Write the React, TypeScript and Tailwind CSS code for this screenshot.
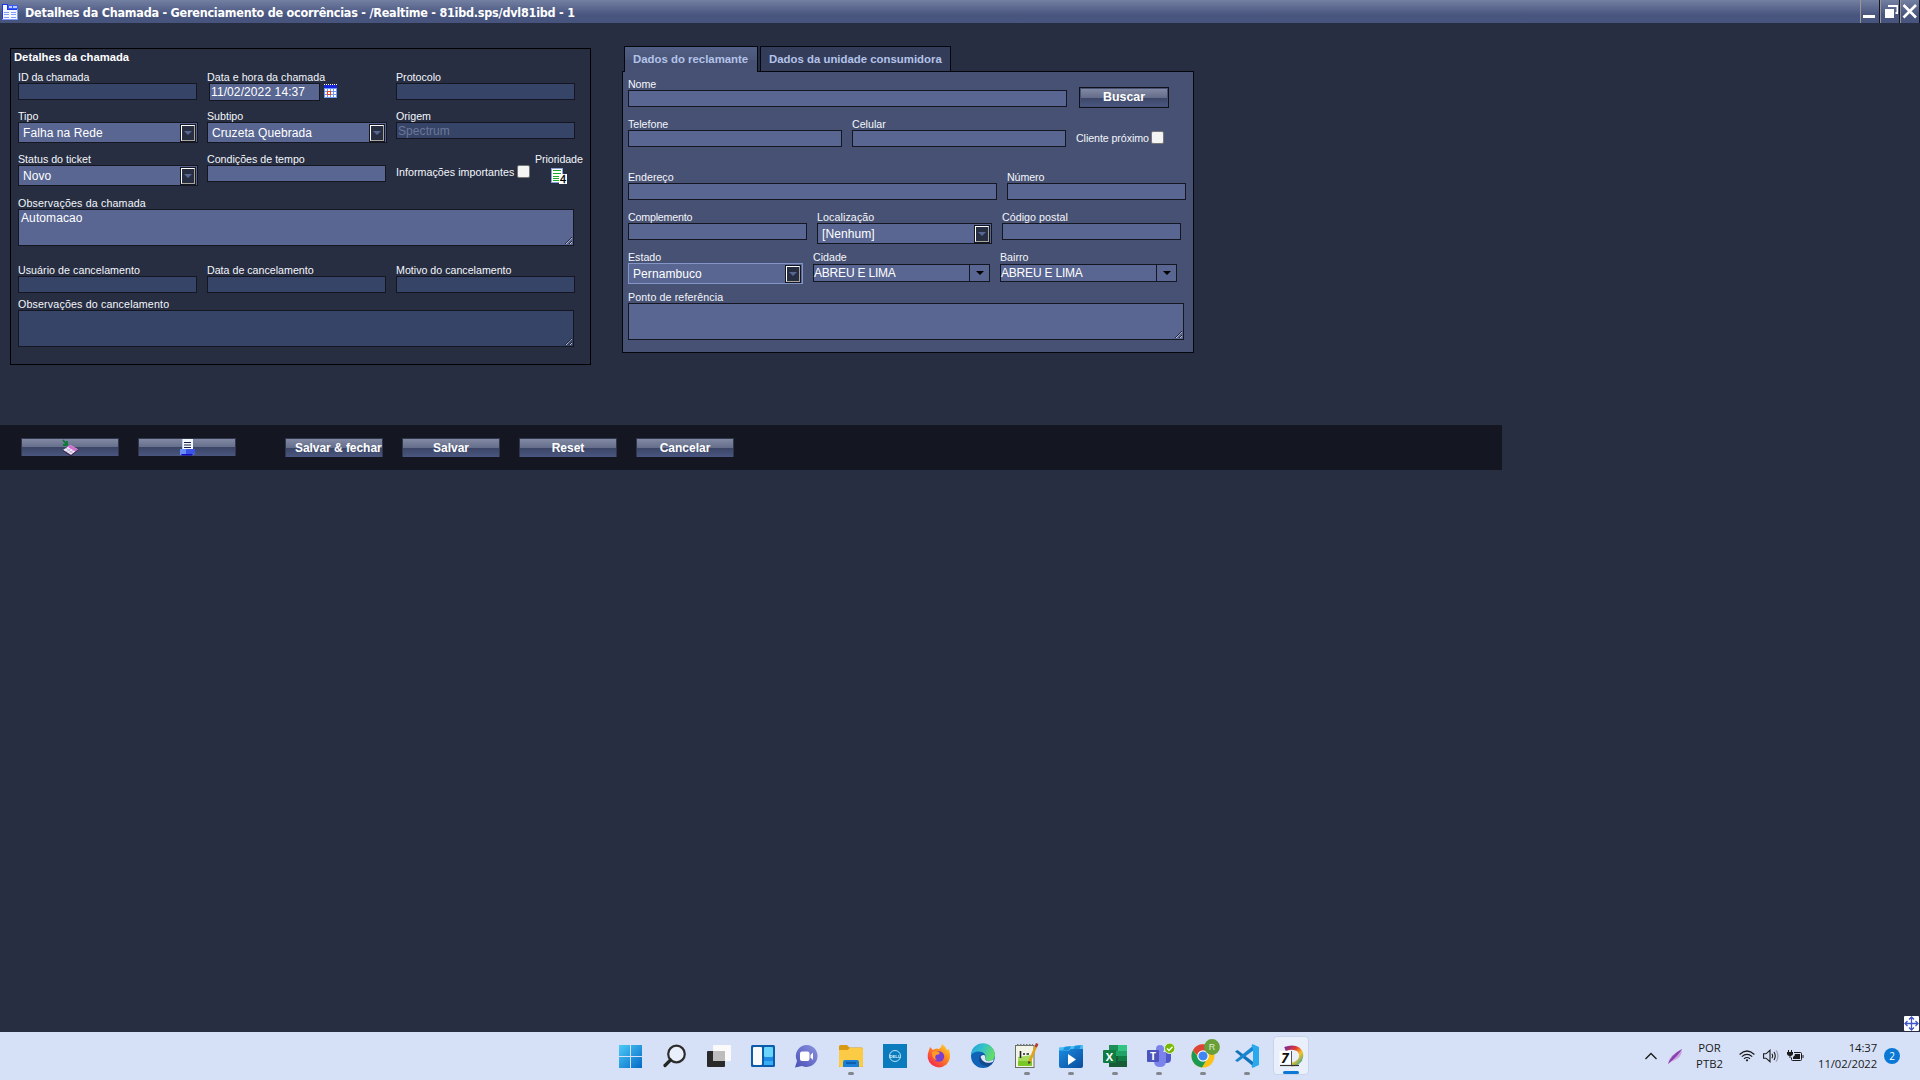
import React from "react";

const DARK = "bg-[#364468]";
const LIGHT = "bg-[#586691]";

function Label({ children }: { children: React.ReactNode }) {
  return <div className="h-3 whitespace-nowrap text-[10.67px] leading-3 text-[#f4f6fb]">{children}</div>;
}

function Field({ label, className = "", children }: { label: string; className?: string; children: React.ReactNode }) {
  return (
    <div className={className}>
      <Label>{label}</Label>
      {children}
    </div>
  );
}

function Input({ w, tone = LIGHT, value = "" }: { w: string; tone?: string; value?: string }) {
  return (
    <div className={`h-[17px] border border-[#141721] pl-px text-[12px] leading-4 tracking-[0.07px] text-[#6c7797] ${w} ${tone}`}>
      {value}
    </div>
  );
}

function Select({ w, value, focus = false }: { w: string; value: string; focus?: boolean }) {
  return (
    <div className={`flex h-[21px] items-center justify-between border bg-[#586691] pl-1 pr-[1px] ${w} ${focus ? "border-[#8496c8]" : "border-[#141721]"}`}>
      <span className="pt-px text-[12px] leading-[19px] tracking-[0.08px] text-white">{value}</span>
      <span className="flex h-[18px] w-4 items-center justify-center border border-[#141721] bg-[#272e42]">
        <span className="flex h-4 w-[14px] items-center justify-center border border-b-[#aaa69c] border-l-white border-r-[#aaa69c] border-t-white">
          <svg width="8" height="4" viewBox="0 0 8 4"><path d="M0 0H8L4 4Z" fill="#586691" /></svg>
        </span>
      </span>
    </div>
  );
}

function Combo({ w, value }: { w: string; value: string }) {
  return (
    <div className={`flex h-[18px] border border-[#141721] bg-[#586691] ${w}`}>
      <span className="flex-1 text-[12px] leading-4 tracking-[-0.2px] text-white">{value}</span>
      <span className="flex w-5 items-center justify-center border-l border-[#141721]">
        <svg width="8" height="4" viewBox="0 0 8 4"><path d="M0 0H8L4 4Z" fill="#000" /></svg>
      </span>
    </div>
  );
}

function TextArea({ tone = LIGHT, value = "" }: { tone?: string; value?: string }) {
  return (
    <div className={`flex h-[37px] w-[556px] justify-between border border-[#141721] pl-[2px] tracking-normal ${tone}`}>
      <span className="text-[12px] leading-[17px] tracking-[0.1px] text-white">{value}</span>
      <svg className="self-end" width="9" height="9" viewBox="0 0 9 9" fill="none">
        <path d="M1 8L8 1M5 8L8 5" stroke="#20263a" />
        <path d="M2 8L8 2M6 8L8 6" stroke="#d4d8e4" strokeDasharray="1.2 .5" />
      </svg>
    </div>
  );
}

function CheckBox() {
  return <span className="h-[13px] w-[13px] rounded-[2px] border border-[#767676] bg-[#f4f4f4]" />;
}

function CalendarIcon() {
  return (
    <svg width="13" height="14" viewBox="0 0 13 14" shapeRendering="crispEdges">
      <rect y="1" width="13" height="13" fill="#6f95f5" />
      <rect y="1" width="13" height="3" fill="#1626d8" />
      <path d="M0 .5H13" stroke="#fff" strokeDasharray="1 1" />
      <path d="M1 5h2v2H1zM4 5h2v2H4zM7 5h2v2H7zM10 5h2v2H10zM1 8h2v2H1zM7 8h2v2H7zM10 8h2v2H10zM1 11h2v2H1zM4 11h2v2H4zM7 11h2v2H7zM10 11h2v2H10z" fill="#fff" />
      <rect x="3.500" y="7.500" width="3" height="3" fill="#fff" stroke="#f04010" />
    </svg>
  );
}

function WindowIcon() {
  return (
    <svg width="16" height="16" viewBox="0 0 16 16" shapeRendering="crispEdges">
      <path d="M0 0H6V1H16V16H0Z" fill="#f4f7ff" />
      <path d="M6 1H16V5H6Z" fill="#3b5cf0" />
      <path d="M7 2H10V4H7ZM11 2H15V4H11Z" fill="#b9c9fb" />
      <path d="M.5 16V.5H5.500V5.500H15.500" fill="none" stroke="#1c36f0" />
      <path d="M15.500 5V15.500H0" fill="none" stroke="#7d9af8" />
      <path d="M2 8.500H7M9 8.500H14M2 10.500H7M9 10.500H14M2 13.500H7M9 13.500H14" stroke="#7f9cf6" />
    </svg>
  );
}

function PriorityIcon() {
  return (
    <svg width="16" height="16" viewBox="0 0 16 16">
      <rect x=".5" y=".5" width="11" height="14" fill="#fff" stroke="#8aa2d8" />
      <path d="M2 2.500H10M2 5.500H10M2 8.500H10M2 10.500H10M2 12.500H10" stroke="#18a82c" strokeWidth="1.200" shapeRendering="crispEdges" />
      <rect x="8" y="6" width="8" height="10" fill="#fff" />
      <text x="9" y="14.800" fontFamily="Liberation Sans" fontSize="11" fill="#000" stroke="#000" strokeWidth=".3">4</text>
    </svg>
  );
}

const buttonFace = "bg-[linear-gradient(180deg,#8189a3_0%,#646d8a_50%,#3b4566_50%,#4a5680_100%)]";

function BarButton({ children, tall = false, className = "justify-center" }: { children: React.ReactNode; tall?: boolean; className?: string }) {
  return (
    <div className={`flex w-[98px] items-center border border-b-0 border-[#30374c] text-[12px] font-bold text-white ${buttonFace} ${tall ? "h-[19px]" : "h-[18px]"} ${className}`}>
      <span className="whitespace-nowrap">{children}</span>
    </div>
  );
}

function TitleBar() {
  return (
    <header className="flex h-[23px] bg-[linear-gradient(180deg,#7480a1_0%,#5f6b91_30%,#48557e_65%,#47547d_100%)]">
      <div className="ml-[2px] mt-[4px]"><WindowIcon /></div>
      <h1 className="ml-[7px] flex-1 whitespace-nowrap text-[12.5px] font-bold leading-[25px] tracking-[-0.24px] text-white [font-family:'DejaVu_Sans_Condensed','Noto_Sans',sans-serif]">
        Detalhes da Chamada - Gerenciamento de ocorrências - /Realtime - 81ibd.sps/dvl81ibd - 1
      </h1>
      <div className="h-[23px] w-5 border-l border-r border-l-[#99968f] border-r-[#141721]">
        <svg width="18" height="23"><rect x="2" y="15" width="12" height="3" fill="#fff" /></svg>
      </div>
      <div className="h-[23px] w-5 border-l border-r border-l-[#99968f] border-r-[#141721]">
        <svg width="18" height="23"><path d="M4 9h9v9H4zM7 5H17V14H14.500V12H15.500V7H7z" fill="#fff" /></svg>
      </div>
      <div className="h-[23px] w-5 border-l border-r border-l-[#99968f] border-r-[#141721]">
        <svg width="18" height="23"><path d="M2.500 5L15 17.500M15 5L2.500 17.500" stroke="#fff" strokeWidth="2.600" /></svg>
      </div>
    </header>
  );
}

function CallDetails() {
  return (
    <section className="h-[317px] w-[581px] border border-black pl-[7px]">
      <h2 className="-ml-1 mt-[2px] h-5 text-[11.25px] font-bold leading-[13px] text-white">Detalhes da chamada</h2>
      <div className="flex h-[39px]">
        <Field label="ID da chamada" className="w-[189px] tracking-[-0.08px]"><Input w="w-[179px]" tone={DARK} /></Field>
        <Field label="Data e hora da chamada" className="w-[189px] tracking-[0.04px]">
          <div className="ml-[2px] flex">
            <div className="h-[18px] w-[111px] border border-[#141721] bg-[#586691] pl-px text-[12px] leading-[17px] tracking-[0.1px] text-white">11/02/2022 14:37</div>
            <div className="ml-1 mt-[1px]"><CalendarIcon /></div>
          </div>
        </Field>
        <Field label="Protocolo"><Input w="w-[179px]" tone={DARK} /></Field>
      </div>
      <div className="flex h-[43px]">
        <Field label="Tipo" className="w-[189px]"><Select w="w-[180px]" value="Falha na Rede" /></Field>
        <Field label="Subtipo" className="w-[189px]"><Select w="w-[180px]" value="Cruzeta Quebrada" /></Field>
        <Field label="Origem"><Input w="w-[179px]" tone={DARK} value="Spectrum" /></Field>
      </div>
      <div className="flex h-11">
        <Field label="Status do ticket" className="w-[189px]"><Select w="w-[180px]" value="Novo" /></Field>
        <Field label="Condições de tempo" className="w-[189px]"><Input w="w-[179px]" /></Field>
        <div className="flex w-[139px] pt-3">
          <div className="w-[121px] pt-[1px] tracking-[0.05px]"><Label>Informações importantes</Label></div>
          <CheckBox />
        </div>
        <Field label="Prioridade" className="tracking-[-0.08px]"><div className="ml-4 mt-[3px]"><PriorityIcon /></div></Field>
      </div>
      <div className="h-[67px]">
        <Field label="Observações da chamada" className="tracking-[0.16px]"><TextArea value="Automacao" /></Field>
      </div>
      <div className="flex h-[34px] gap-[10px]">
        <Field label="Usuário de cancelamento" className="tracking-[0.05px]"><Input w="w-[179px]" tone={DARK} /></Field>
        <Field label="Data de cancelamento"><Input w="w-[179px]" tone={DARK} /></Field>
        <Field label="Motivo do cancelamento"><Input w="w-[179px]" tone={DARK} /></Field>
      </div>
      <Field label="Observações do cancelamento" className="tracking-[0.16px]"><TextArea tone={DARK} /></Field>
    </section>
  );
}

function Claimant() {
  return (
    <section className="w-[572px]">
      <div className="flex h-[26px] gap-[2px] pl-[2px] text-[11.4px] font-bold leading-[25px] text-[#b3c3ea]">
        <div className="z-10 h-[26px] w-[134px] border border-b-0 border-[#05070e] bg-[linear-gradient(180deg,#525f85_0%,#4b5779_50%,#465072_52%,#475173_100%)] pl-2">Dados do reclamante</div>
        <div className="h-[26px] w-[191px] border border-[#05070e] bg-[#333c58] pl-2">Dados da unidade consumidora</div>
      </div>
      <div className="-mt-px h-[282px] border border-[#05070e] bg-[#475173] pl-[5px] pt-[6px]">
        <div className="flex h-10">
          <Field label="Nome" className="w-[451px] tracking-[-0.1px]"><Input w="w-[439px]" /></Field>
          <div className="mt-[9px] flex h-[21px] w-[90px] items-center justify-center border border-[#0f121c] p-px">
            <span className={`flex h-full w-full items-center justify-center text-[12.4px] font-bold text-white ${buttonFace}`}>Buscar</span>
          </div>
        </div>
        <div className="flex h-[53px]">
          <Field label="Telefone" className="w-[224px]"><Input w="w-[214px]" /></Field>
          <Field label="Celular" className="w-[224px]"><Input w="w-[214px]" /></Field>
          <div className="flex pt-[13px]">
            <div className="w-[75px] pt-[1px] tracking-[-0.08px]"><Label>Cliente próximo</Label></div>
            <CheckBox />
          </div>
        </div>
        <div className="flex h-10 gap-[10px]">
          <Field label="Endereço"><Input w="w-[369px]" /></Field>
          <Field label="Número" className="tracking-[-0.1px]"><Input w="w-[179px]" /></Field>
        </div>
        <div className="flex h-10 gap-[10px]">
          <Field label="Complemento" className="tracking-[-0.2px]"><Input w="w-[179px]" /></Field>
          <Field label="Localização" className="tracking-[0.1px]"><Select w="w-[175px]" value="[Nenhum]" /></Field>
          <Field label="Código postal" className="tracking-[0.05px]"><Input w="w-[179px]" /></Field>
        </div>
        <div className="flex h-10 gap-[10px]">
          <Field label="Estado"><Select w="w-[175px]" value="Pernambuco" focus /></Field>
          <Field label="Cidade"><div className="pt-px"><Combo w="w-[177px]" value="ABREU E LIMA" /></div></Field>
          <Field label="Bairro"><div className="pt-px"><Combo w="w-[177px]" value="ABREU E LIMA" /></div></Field>
        </div>
        <Field label="Ponto de referência" className="tracking-[0.12px]"><TextArea /></Field>
      </div>
    </section>
  );
}

function ActionBar() {
  return (
    <div className="flex h-[45px] w-[1502px] gap-[19px] bg-[#141721] pl-[21px] pt-[13px]">
      <BarButton>
        <svg width="17" height="18" viewBox="0 0 17 18">
          <path d="M1 1L5 6M5 2V6H1" stroke="#0b7a38" strokeWidth="1.800" fill="none" />
          <path d="M1 11L8.500 6L16 10.500L9 16Z" fill="#eee8f8" />
          <path d="M8.500 6L16 10.500L13.500 12.500L6 8Z" fill="#ea5bd5" />
          <path d="M4 9L11 14.500M4 13L12 7.500M6.500 14.500L14 9.500M8 7L15 11.500" stroke="#a396c7" strokeWidth=".6" />
          <path d="M1 11L9 16L16 10.500V11.500L9 17.500L1 12Z" fill="#41284e" />
        </svg>
      </BarButton>
      <BarButton>
        <svg width="16" height="17" viewBox="0 0 16 17">
          <path d="M3 0H14V11H3Z" fill="#f3f7ff" />
          <path d="M3 0H4V11H3Z" fill="#b8cdf8" />
          <path d="M5 3.500H12M5 6H12M5 8.500H12" stroke="#141b44" strokeWidth="1.200" />
          <path d="M1 10H3L5 10H16V14L14 16H1Z" fill="#6a8ef8" />
          <path d="M7 10H16V14L14 15H7Z" fill="#3a52ea" />
          <path d="M2 15H14L13 16.500H3Z" fill="#1310c0" />
        </svg>
      </BarButton>
      <div className="ml-[30px] flex gap-[19px]">
        <BarButton tall className="justify-start pl-[9px] tracking-[-0.05px]">Salvar &amp; fechar</BarButton>
        <BarButton tall>Salvar</BarButton>
        <BarButton tall>Reset</BarButton>
        <BarButton tall>Cancelar</BarButton>
      </div>
    </div>
  );
}

const apps: { running?: boolean; active?: boolean; icon: React.ReactNode }[] = [
  { icon: <><defs><linearGradient id="win" x1="0" y1="0" x2="1" y2="1"><stop stopColor="#4ccbf8" /><stop offset="1" stopColor="#0568c6" /></linearGradient></defs><path d="M2 3H13V14H2zM14 3H25V14H14zM2 15H13V26H2zM14 15H25V26H14z" fill="url(#win)" /></> },
  { icon: <><circle cx="15.500" cy="12" r="8.300" fill="#e9effb" stroke="#2d2d2d" strokeWidth="2.200" /><path d="M9.500 18L4 23.500" stroke="#262626" strokeWidth="3.200" strokeLinecap="round" /></> },
  { icon: <><rect x="2" y="9" width="18" height="16" rx="1" fill="#292929" /><rect x="8" y="3" width="18" height="16" rx="1" fill="#fafafa" /><path d="M8 9H20V19H8z" fill="#bdbdbd" /></> },
  { icon: <><rect x="2" y="3" width="24" height="22" rx="1.500" fill="#0b5cab" /><rect x="4" y="5" width="9" height="18" rx="1" fill="#fafafa" /><rect x="15" y="5" width="9" height="10" rx="1" fill="#6ad4fb" /><rect x="15" y="15" width="9" height="4" fill="#1d8ae6" /><rect x="15" y="19" width="9" height="4" fill="#39aef5" /></> },
  { icon: <><defs><linearGradient id="chat" x1="1" y1="0" x2="0" y2="1"><stop stopColor="#8b93e0" /><stop offset="1" stopColor="#4b4fb5" /></linearGradient></defs><path d="M14 3a11 11 0 1 1-5 21L2 25.500L4 19A11 11 0 0 1 14 3Z" fill="url(#chat)" /><rect x="7" y="9.500" width="9.500" height="9.500" rx="2" fill="#fff" /><path d="M17.500 13L20 10.500V18L17.500 15.500Z" fill="#fff" /></> },
  { running: true, icon: <><path d="M2 4.500Q2 3 3.500 3H10L12.500 5.500H24.500Q26 5.500 26 7V25H2Z" fill="#d99a12" /><path d="M2 8H10.500L13 6H24.500Q26 6 26 7.500V23.500Q26 25 24.500 25H3.500Q2 25 2 23.500Z" fill="#fccb45" /><path d="M6 25V20Q6 18 8 18H20Q22 18 22 20V25Z" fill="#1a7fd6" /><path d="M9 21H19" stroke="#0a4f9a" strokeWidth="1.400" /></> },
  { icon: <><rect x="2" y="2" width="24" height="24" fill="#0a7bbd" /><circle cx="14" cy="14" r="5.500" fill="none" stroke="#b9e2f6" strokeWidth="1" /><text x="14" y="15.600" textAnchor="middle" fontSize="4.200" fontWeight="700" fontFamily="Liberation Sans" fill="#dff2fb">DELL</text></> },
  { icon: <><defs><linearGradient id="fox" x1="1" y1="0" x2=".2" y2="1"><stop stopColor="#ffe03a" /><stop offset=".45" stopColor="#ff8a1e" /><stop offset="1" stopColor="#f2204f" /></linearGradient></defs><path d="M17 2Q21 5 22 8L24 7Q27 17 21.500 22.500Q14.500 28 7 23Q0 17 4 8L5 5L8 8Q11 5.500 14 7Q17 5 17 2Z" fill="url(#fox)" /><circle cx="14" cy="14.500" r="5.200" fill="#7a3fd0" /><path d="M7 10Q12 8 15 11Q14 13 11 13Q9 16 12 18Q7 18 7 10Z" fill="#ff9b2a" /></> },
  { icon: <><defs><linearGradient id="edge" x1="0" y1="0" x2="1" y2=".4"><stop stopColor="#1fa1e3" /><stop offset=".5" stopColor="#35c0c9" /><stop offset="1" stopColor="#63dd6a" /></linearGradient></defs><circle cx="14" cy="14" r="12" fill="#0f63b8" /><path d="M2 13A12 12 0 0 1 26 13.500Q25.500 19 19 19Q16 18.500 16 16.500Q18 12 13 10Q6 8 2 13Z" fill="url(#edge)" /><path d="M10 17Q10 13 13.500 12Q17.500 13 16 16.500Q17 19.500 22 19.500L24.800 18Q23 23 19 24.500Q10 24 10 17Z" fill="#134a8e" /><path d="M11.500 15Q12.500 12.500 15 13Q17 14 16 16.500Q16.500 19 20 19.300L25 17.500Q24 20.500 22 20.500Q14 22 11.500 15Z" fill="#dfe8f8" /></> },
  { running: true, icon: <><rect x="2.500" y="3.500" width="18.500" height="22" fill="#f2f4e8" stroke="#66705c" /><path d="M5 15L19 13V24H5Z" fill="#a5dc5c" /><path d="M5 19H19V24H5Z" fill="#7cc728" /><path d="M4 3H20" stroke="#777" strokeWidth="2" strokeDasharray="1.500 1.500" /><path d="M7.500 9V16M10 12H12M13.500 12H16" stroke="#222" strokeWidth="1.600" /><path d="M23 4L16.500 20" stroke="#e1a21d" strokeWidth="2.600" /><path d="M24.200 1.500L22.800 5" stroke="#b03a2e" strokeWidth="2.600" /><path d="M15.200 19L17.800 20L15.500 22.500Z" fill="#333" /></> },
  { running: true, icon: <><defs><linearGradient id="mov" x1="0" y1="0" x2="1" y2="1"><stop stopColor="#1b8be0" /><stop offset="1" stopColor="#0a4c9c" /></linearGradient></defs><path d="M2 5.500L26 3V12H2Z" fill="#45bdf5" /><path d="M8 4.800L14 4.200L12 8H6ZM18 3.800L24 3.200L22 8H16Z" fill="#1c8ede" /><path d="M2 8.500H12L14 7H26V24Q26 26 24 26H4Q2 26 2 24Z" fill="url(#mov)" /><path d="M11 12L19 17.500L11 23Z" fill="#fff" /></> },
  { running: true, icon: <><rect x="8" y="3" width="18" height="22" rx="1.500" fill="#21a366" /><path d="M8 3H17V9H8Z" fill="#1c8f58" /><path d="M17 3H26V9H17Z" fill="#33c481" /><path d="M8 14H26V25H8Z" fill="#185c37" /><path d="M17 14H26V19H17Z" fill="#107c41" /><rect x="2" y="8" width="13" height="13" rx="1" fill="#107c41" /><text x="8.500" y="18.500" textAnchor="middle" fontSize="11" fontWeight="700" fontFamily="Open Sans" fill="#fff">X</text></> },
  { running: true, icon: <><circle cx="15" cy="7" r="4" fill="#7b83eb" /><circle cx="23" cy="8" r="3" fill="#5059c9" /><path d="M20 10H26V17Q26 21 22 21H19Z" fill="#5059c9" /><path d="M9 10H21V19Q21 25 15 25Q9 25 9 19Z" fill="#7b83eb" /><rect x="2" y="8" width="12" height="12" rx="1" fill="#4b53bc" /><text x="8" y="17.800" textAnchor="middle" fontSize="10.500" fontWeight="700" fontFamily="Open Sans" fill="#fff">T</text><circle cx="24.700" cy="6.300" r="5.200" fill="#76b900" stroke="#e9f0e0" strokeWidth="1" /><path d="M22 6.500L24 8.500L27.500 4.800" fill="none" stroke="#fff" strokeWidth="1.400" /></> },
  { running: true, icon: <><circle cx="14" cy="14" r="11.500" fill="#fbc116" /><path d="M4 8.300A11.500 11.500 0 0 1 24.500 9H14Q10 9 9 14Z" fill="#db4437" /><path d="M4 8.300A11.500 11.500 0 0 0 13 25.500L18 17Q12 21 9 15Z" fill="#1c9a53" /><circle cx="14" cy="14" r="5.200" fill="#4285f4" stroke="#fff" strokeWidth="1.200" /><circle cx="23" cy="5" r="7.900" fill="#689f38" /><text x="23" y="8.200" textAnchor="middle" fontSize="9" fontFamily="Liberation Sans" fill="#dfeccf">R</text></> },
  { running: true, icon: <><path d="M2 9.500L4.500 8L21 20.500V25Z" fill="#1373b8" /><path d="M2 18.500L4.500 20L21 8V3Z" fill="#1a86cf" /><path d="M19.500 2L26 5V23L19.500 26L18.500 24.500L20 21V7L18.500 3.500Z" fill="#29a9ee" /></> },
  { running: true, active: true, icon: <><defs><linearGradient id="sev" x1="0" y1="0" x2="1" y2="1"><stop stopColor="#7c2b96" /><stop offset=".35" stopColor="#e43b2d" /><stop offset=".65" stopColor="#f4c522" /><stop offset="1" stopColor="#2f9f9c" /></linearGradient></defs><path d="M8 7Q16 4 21.500 7.500Q26 12 23 18Q19.500 22.500 14 22.500" fill="none" stroke="url(#sev)" strokeWidth="4.200" /><path d="M2.500 9H15V23H2.500Z" fill="#fff" opacity=".9" /><path d="M3 23.500H22" stroke="#333" strokeWidth="1.200" /><path d="M14.500 9V23" stroke="#555" strokeWidth="1" /><text x="4" y="20.500" fontSize="14" fontStyle="italic" fontWeight="700" fontFamily="Open Sans" fill="#111">7</text></> },
];

function Taskbar() {
  return (
    <footer className="flex h-12 bg-[#d6e1f8] text-[#1a1a1a] [font-family:'Open_Sans','Noto_Sans',sans-serif]">
      <nav className="ml-[609px] flex">
        {apps.map((a, i) => (
          <div key={i} className="flex h-12 w-11 justify-center pt-1">
            <div className={a.active ? "flex h-[39px] w-9 flex-col items-center rounded border border-[#c8d4ec] bg-[#eaf0fb] pt-1" : "flex h-[39px] w-9 flex-col items-center pt-[6px]"}>
              <svg width="28" height="28" viewBox="0 0 28 28" className={a.active ? "mt-px h-7 shrink-0 overflow-visible" : "h-7 shrink-0 overflow-visible"}>{a.icon}</svg>
              {a.running && <div className={a.active ? "mt-px h-[3px] w-4 shrink-0 rounded-full bg-[#0a78d4]" : "mt-[2px] h-[3px] w-[6px] shrink-0 rounded-full bg-[#82878f]"} />}
            </div>
          </div>
        ))}
      </nav>
      <div className="ml-auto flex h-12 items-center">
        <svg width="14" height="8" viewBox="0 0 14 8" fill="none"><path d="M1.500 7L7 1.500L12.500 7" stroke="#1a1a1a" strokeWidth="1.300" /></svg>
        <svg className="ml-[9px]" width="16" height="17" viewBox="0 0 16 17"><path d="M1 16Q2 7 15 1Q15 9 8 12Q4 13 1 16Z" fill="#c9a4dc" /><path d="M1 16Q4 7 15 1Q11 8 1 16Z" fill="#8a3fb0" /></svg>
        <div className="ml-[13px] w-[27px] text-center text-[11.300px] leading-4">POR<br />PTB2</div>
        <svg className="ml-4" width="16" height="12" viewBox="0 0 16 12" fill="none" stroke="#1a1a1a" strokeWidth="1.200"><path d="M.6 4.500Q8-2.500 15.400 4.500M2.800 6.600Q8 2 13.200 6.600M5 8.700Q8 6.300 11 8.700" /><circle cx="8" cy="10.300" r="1.100" fill="#1a1a1a" stroke="none" /></svg>
        <svg className="ml-2" width="16" height="14" viewBox="0 0 16 14" fill="none" stroke="#1a1a1a" strokeWidth="1.100"><path d="M.6 4.800H3L7 1.300V12.700L3 9.200H.6Z" /><path d="M9 4.800Q10.500 7 9 9.200M11 3Q13.500 7 11 11" /><path d="M13 1.300Q17 7 13 12.700" opacity=".35" /></svg>
        <svg className="ml-2" width="17" height="12" viewBox="0 0 17 12"><path d="M7 2.500H13.500Q14.500 2.500 14.500 3.500V9.500Q14.500 10.500 13.500 10.500H5.500Q4.500 10.500 4.500 9.500V7.500" fill="none" stroke="#1a1a1a" /><path d="M8 4H13V9H6V7Q8 6 8 4Z" fill="#1a1a1a" /><path d="M15.500 5H16.500V8H15.500ZM0 2H1V0H2V2H4V0H5V2H6V4Q5.500 6 3.500 6V8H2.500V6Q.5 6 0 4Z" fill="#1a1a1a" /></svg>
        <div className="ml-[13px] w-[60px] whitespace-nowrap text-right text-[11.300px] leading-4 tracking-[-0.1px]">14:37<br />11/02/2022</div>
        <div className="ml-[7px] mr-5 flex h-4 w-4 items-center justify-center rounded-full bg-[#0a78d4] text-[10px] text-white">2</div>
      </div>
    </footer>
  );
}

export default function App() {
  return (
    <div className="flex h-[1080px] w-[1920px] flex-col overflow-hidden bg-[#272e42] [font-family:'Liberation_Sans',Arial,sans-serif]">
      <TitleBar />
      <main className="flex flex-1 flex-col">
        <div className="flex h-[402px] items-start pl-[10px]">
          <div className="pt-[25px]"><CallDetails /></div>
          <div className="ml-[31px] pt-[23px]"><Claimant /></div>
        </div>
        <ActionBar />
        <div className="ml-auto mr-[1px] mt-auto mb-[1px] h-[15px] w-[15px] rounded-[1px] bg-white">
          <svg width="15" height="15" viewBox="0 0 15 15"><path d="M7.500 2V13M2 7.500H13M5 3.500L7.500 1L10 3.500M5 11.500L7.500 14L10 11.500M3.500 5L1 7.500L3.500 10M11.500 5L14 7.500L11.500 10" fill="none" stroke="#4154c8" strokeWidth="1.300" /></svg>
        </div>
      </main>
      <Taskbar />
    </div>
  );
}
